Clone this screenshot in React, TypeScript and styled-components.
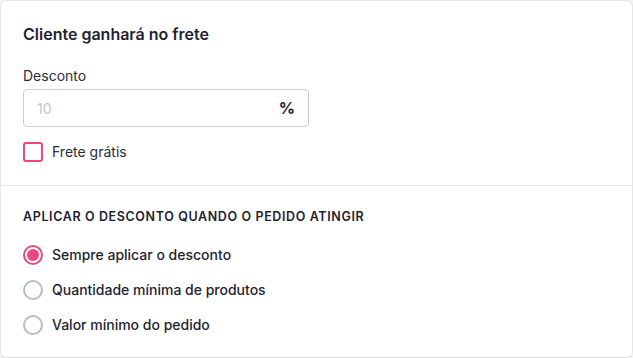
import React, { useState } from "react";
import styled, { createGlobalStyle } from "styled-components";

const Global = createGlobalStyle`
  html, body { margin: 0; padding: 0; background: #f3f4f6; }
  body { font-family: Inter, "Noto Sans", sans-serif; color: #1f2331; -webkit-font-smoothing: antialiased; }
  * { box-sizing: border-box; }
`;

const PINK = "#f0457e";

const Card = styled.div`
  width: 633px;
  height: 358px;
  background: #fff;
  border: 1px solid #e6e7ea;
  border-bottom-color: #dcdde1;
  border-radius: 6px;
  display: flex;
  flex-direction: column;
  overflow: hidden;
`;

const Section = styled.div<{ $top: number; $bottom: number }>`
  flex-shrink: 0;
  padding: ${(p) => p.$top}px 22px ${(p) => p.$bottom}px 22px;
  display: flex;
  flex-direction: column;
`;

const Divider = styled.div`
  flex-shrink: 0;
  height: 1px;
  background: #e8e9ec;
`;

const Title = styled.h2`
  margin: 0;
  font-size: 16px;
  font-weight: 600;
  line-height: 20px;
  color: #1f2331;
`;

const Label = styled.label`
  margin-top: 23px;
  font-size: 14px;
  line-height: 18px;
  color: #2a2e3a;
`;

const InputBox = styled.div`
  margin-top: 4px;
  width: 286px;
  height: 38px;
  border: 1px solid #c9ccd2;
  border-radius: 4px;
  display: flex;
  align-items: center;
  padding: 0 13px 0 13px;
`;

const Field = styled.input`
  flex: 1;
  border: none;
  outline: none;
  font-family: inherit;
  font-size: 14px;
  color: #1f2331;
  background: transparent;
  padding: 0;
  &::placeholder { color: #c4c7cd; }
`;

const Suffix = styled.span`
  font-size: 16px;
  font-weight: 700;
  color: #1f2331;
`;

const CheckRow = styled.label`
  margin-top: 15px;
  display: flex;
  align-items: center;
  gap: 9px;
  font-size: 14px;
  line-height: 20px;
  color: #2a2e3a;
  cursor: pointer;
`;

const Box = styled.span`
  width: 20px;
  height: 20px;
  border: 2px solid ${PINK};
  border-radius: 3px;
  display: inline-block;
`;

const Heading = styled.h3`
  margin: 0;
  font-size: 12.5px;
  font-weight: 600;
  letter-spacing: 0.62px;
  line-height: 16px;
  text-transform: uppercase;
  color: #1f2331;
`;

const RadioList = styled.div`
  margin-top: 20px;
  display: flex;
  flex-direction: column;
  gap: 15px;
`;

const RadioRow = styled.label`
  display: flex;
  align-items: center;
  gap: 9px;
  font-size: 14px;
  font-weight: 500;
  line-height: 20px;
  color: #1f2331;
  cursor: pointer;
`;

const Circle = styled.span<{ $on: boolean }>`
  width: 20px;
  height: 20px;
  border-radius: 50%;
  border: 2px solid ${(p) => (p.$on ? PINK : "#b9bcc3")};
  display: flex;
  align-items: center;
  justify-content: center;
  &::after {
    content: "";
    width: 12px;
    height: 12px;
    border-radius: 50%;
    background: ${(p) => (p.$on ? PINK : "transparent")};
  }
`;

const options = [
  "Sempre aplicar o desconto",
  "Quantidade mínima de produtos",
  "Valor mínimo do pedido",
];

export default function App() {
  const [sel, setSel] = useState(0);
  return (
    <>
      <Global />
      <Card>
        <Section $top={23} $bottom={23}>
          <Title>Cliente ganhará no frete</Title>
          <Label>Desconto</Label>
          <InputBox>
            <Field placeholder="10" />
            <Suffix>%</Suffix>
          </InputBox>
          <CheckRow>
            <Box />
            Frete grátis
          </CheckRow>
        </Section>
        <Divider />
        <Section $top={23} $bottom={20}>
          <Heading>Aplicar o desconto quando o pedido atingir</Heading>
          <RadioList>
            {options.map((o, i) => (
              <RadioRow key={o} onClick={() => setSel(i)}>
                <Circle $on={sel === i} />
                {o}
              </RadioRow>
            ))}
          </RadioList>
        </Section>
      </Card>
    </>
  );
}
